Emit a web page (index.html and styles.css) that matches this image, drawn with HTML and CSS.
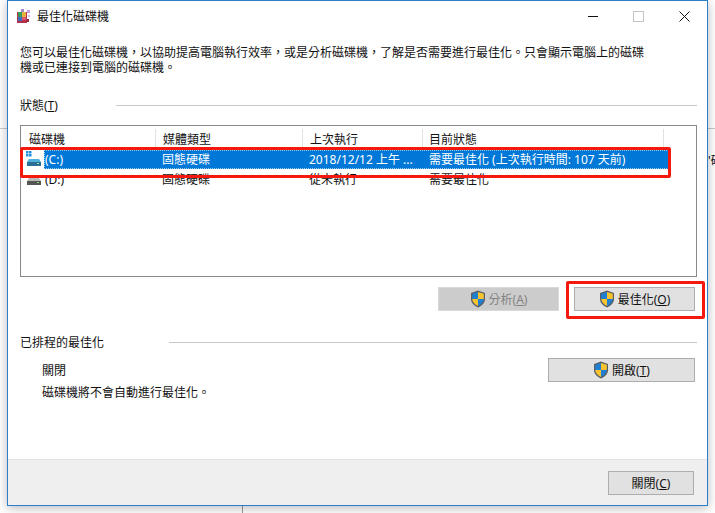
FILE: index.html
```html
<!DOCTYPE html>
<html lang="zh-Hant">
<head>
<meta charset="utf-8">
<title>最佳化磁碟機</title>
<link rel="stylesheet" href="styles.css">
</head>
<body>
<svg width="0" height="0" class="defs">
  <symbol id="shield" viewBox="0 0 16 18">
    <path d="M8 .6 L15 3 V9 C15 13 12 15.8 8 17.4 C4 15.8 1 13 1 9 V3 Z" fill="#5a5f66"/>
    <path d="M8 2 V9 H2.2 V3.8 Z" fill="#1f7fd0"/>
    <path d="M8 2 L13.8 3.8 V9 H8 Z" fill="#f7c32e"/>
    <path d="M8 9 H2.2 C2.4 12.2 4.8 14.4 8 15.9 Z" fill="#f7c32e"/>
    <path d="M8 9 H13.8 C13.6 12.2 11.2 14.4 8 15.9 Z" fill="#1f7fd0"/>
  </symbol>
</svg>
<div class="bg-line bg-left"></div>
<div class="bg-line bg-right"></div>
<div class="bg-line bg-bottom"></div>
<div class="bg-text">'碟</div>

<main class="window">
  <header class="titlebar">
    <svg class="app-icon" width="16" height="16" viewBox="0 0 16 16">
      <rect x="1" y="4" width="10" height="11" fill="#b5304a"/>
      <rect x="2" y="4" width="4" height="5" fill="#3a9a5c"/>
      <rect x="6" y="4" width="4" height="5" fill="#e8b23c"/>
      <rect x="2" y="9" width="4" height="4" fill="#3a6fc0"/>
      <rect x="6" y="9" width="4" height="3" fill="#e05a70"/>
      <rect x="11" y="2" width="3" height="3" fill="#c9a0e0"/>
      <rect x="12" y="7" width="2" height="2" fill="#d8b8ea"/>
      <rect x="5" y="1" width="3" height="3" fill="#a88ac8"/>
      <rect x="11" y="11" width="2" height="3" fill="#8c2a40"/>
    </svg>
    <span class="title">最佳化磁碟機</span>
    <div class="controls">
      <svg class="ctl" width="11" height="11" viewBox="0 0 11 11"><path d="M1 5.5H11" stroke="#111" fill="none"/></svg>
      <svg class="ctl" width="11" height="11" viewBox="0 0 11 11"><rect x=".5" y=".5" width="10" height="10" stroke="#c4c4c4" fill="none"/></svg>
      <svg class="ctl" width="11" height="11" viewBox="0 0 11 11"><path d="M.5 .5L10.5 10.5M10.5 .5L.5 10.5" stroke="#111" fill="none"/></svg>
    </div>
  </header>

  <div class="content">
    <p class="intro">您可以最佳化磁碟機，以協助提高電腦執行效率，或是分析磁碟機，了解是否需要進行最佳化。只會顯示電腦上的磁碟機或已連接到電腦的磁碟機。</p>

    <div class="group-head status-head">
      <span>狀態(<u>T</u>)</span><span class="rule status-rule"></span>
    </div>

    <div class="list">
      <div class="row head">
        <div class="cell c1">磁碟機</div>
        <div class="cell c2">媒體類型</div>
        <div class="cell c3">上次執行</div>
        <div class="cell c4">目前狀態</div>
      </div>
      <div class="row drive">
        <svg class="drive-icon" width="16" height="16" viewBox="0 0 16 16">
          <rect x="0" y="0" width="2.5" height="2.5" fill="#1f8fe0"/><rect x="3" y="0" width="2.5" height="2.5" fill="#1f8fe0"/>
          <rect x="0" y="3" width="2.5" height="2.5" fill="#1f8fe0"/><rect x="3" y="3" width="2.5" height="2.5" fill="#1f8fe0"/>
          <path d="M3 8 H13 L15 11 H1 Z" fill="#4db1dc"/>
          <rect x="1" y="11" width="14" height="4" fill="#2a6f96"/>
          <rect x="11" y="12" width="2" height="1" fill="#9fe88a"/>
        </svg>
        <div class="selection">
          <div class="cell sel1">(C:)</div>
          <div class="cell c2">固態硬碟</div>
          <div class="cell c3">2018/12/12 上午 ...</div>
          <div class="cell c4">需要最佳化 (上次執行時間: 107 天前)</div>
        </div>
      </div>
      <div class="row drive">
        <svg class="drive-icon" width="16" height="16" viewBox="0 0 16 16">
          <path d="M3 7 H13 L15 10 H1 Z" fill="#b9b9b9"/>
          <rect x="1" y="10" width="14" height="4" fill="#555"/>
          <rect x="11" y="11" width="2" height="1" fill="#7ee05c"/>
        </svg>
        <div class="plain">
          <div class="cell sel1">(D:)</div>
          <div class="cell c2">固態硬碟</div>
          <div class="cell c3">從未執行</div>
          <div class="cell c4">需要最佳化</div>
        </div>
      </div>
    </div>

    <div class="actions">
      <button class="btn disabled analyze"><svg class="shield"><use href="#shield"/></svg>分析(<u>A</u>)</button>
      <button class="btn optimize"><svg class="shield"><use href="#shield"/></svg>最佳化(<u>O</u>)</button>
    </div>

    <div class="group-head sched-head">
      <span>已排程的最佳化</span><span class="rule sched-rule"></span>
    </div>

    <div class="sched">
      <div class="sched-text">
        <div class="sched-state">關閉</div>
        <div class="sched-desc">磁碟機將不會自動進行最佳化。</div>
      </div>
      <button class="btn enable"><svg class="shield"><use href="#shield"/></svg>開啟(<u>T</u>)</button>
    </div>
  </div>

  <footer class="footer">
    <button class="btn close">關閉(<u>C</u>)</button>
  </footer>
</main>

<div class="mark mark-row"></div>
<div class="mark mark-btn"></div>
</body>
</html>
```
FILE: styles.css
```css
* { box-sizing: border-box; }
html, body { margin: 0; padding: 0; }
body {
  width: 715px;
  height: 513px;
  overflow: hidden;
  position: relative;
  background: #fff;
  color: #111;
  font: 12px/15px "Noto Sans", "Noto Sans CJK TC", sans-serif;
}
.defs { position: absolute; }

.bg-line { position: absolute; background: #c9c9c9; }
.bg-left { left: 0; top: 128px; width: 8px; height: 1px; }
.bg-right { left: 707px; top: 128px; width: 8px; height: 1px; }
.bg-bottom { left: 242px; top: 505px; width: 1px; height: 8px; background: #9a9a9a; }
.bg-text { position: absolute; left: 708px; top: 153px; width: 7px; overflow: hidden; white-space: nowrap; }

.window {
  position: relative;
  margin-left: 7px;
  width: 701px;
  height: 506px;
  background: #fff;
  border: 1px solid #2b7fc6;
  box-shadow: 0 2px 10px rgba(0, 0, 0, .28);
  display: flex;
  flex-direction: column;
}

.titlebar {
  height: 30px;
  flex: none;
  display: flex;
  align-items: center;
  padding-left: 8px;
}
.app-icon { margin-right: 5px; }
.title { flex: 1; }
.controls { display: flex; height: 30px; align-items: center; gap: 35px; padding-right: 17px; }
.ctl { display: block; }

.content { flex: 1; padding: 14px 10px 0 12px; }
.intro { margin: 0; width: 630px; height: 30px; }

.group-head { display: flex; align-items: center; justify-content: space-between; height: 15px; }
.status-head { margin-top: 23px; }
.rule { height: 1px; background: #c8c8c8; }
.status-rule { width: 581px; }
.sched-rule { width: 528px; }
u { text-underline-offset: 1px; }

.list {
  margin-top: 12px;
  width: 677px;
  height: 152px;
  border: 1px solid #8a8a8a;
  padding: 1px 0 0 1px;
}
.row { display: flex; height: 20px; align-items: center; }
.head { height: 22px; padding-top: 2px; }
.cell { height: 100%; display: flex; align-items: center; white-space: nowrap; flex: none; }
.head .c1 { width: 134px; padding-left: 7px; border-right: 1px solid #e2e2e2; }
.head .c2 { width: 147px; padding-left: 7px; border-right: 1px solid #e2e2e2; }
.head .c3 { width: 120px; padding-left: 7px; border-right: 1px solid #e2e2e2; }
.head .c4 { width: 241px; padding-left: 6px; border-right: 1px solid #e2e2e2; }

.drive { height: 20px; padding-left: 4px; }
.drive-icon { flex: none; display: block; margin-right: 2px; }
.selection, .plain { display: flex; height: 19px; flex: 1; margin-right: 30px; }
.selection {
  background: #0078d7;
  color: #fff;
  outline: 1px dotted #9ccbf0;
  outline-offset: -1px;
}
.sel1 { width: 118px; padding-left: 1px; }
.selection .c2, .plain .c2 { width: 147px; }
.selection .c3, .plain .c3 { width: 120px; }
.selection .c4, .plain .c4 { width: 240px; }

.actions { display: flex; justify-content: flex-end; gap: 15px; margin-top: 10px; padding-right: 2px; }
.btn {
  font: inherit;
  color: #111;
  height: 24px;
  padding: 0;
  background: #e1e1e1;
  border: 1px solid #adadad;
  display: flex;
  align-items: center;
  justify-content: center;
}
.shield { width: 16px; height: 18px; margin-right: 3px; flex: none; }
.analyze { width: 121px; }
.optimize { width: 121px; }
.disabled { background: #ccc; border-color: #d9d9d9; color: #838383; }

.sched-head { margin-top: 24px; }
.sched { display: flex; justify-content: space-between; padding-left: 22px; padding-right: 2px; margin-top: 8px; }
.sched-state { margin-top: 5px; }
.sched-desc { margin-top: 7px; }
.enable { width: 147px; }

.footer {
  height: 46px;
  flex: none;
  background: #efefef;
  border-top: 1px solid #e2e2e2;
  display: flex;
  justify-content: flex-end;
  align-items: flex-start;
  padding: 11px 13px 0 0;
}
.close { width: 86px; }

.mark { position: absolute; border: 3px solid #f5180c; border-radius: 2px; }
.mark-row { left: 20px; top: 147px; width: 651px; height: 31px; }
.mark-btn { left: 566px; top: 281px; width: 139px; height: 38px; }
```
